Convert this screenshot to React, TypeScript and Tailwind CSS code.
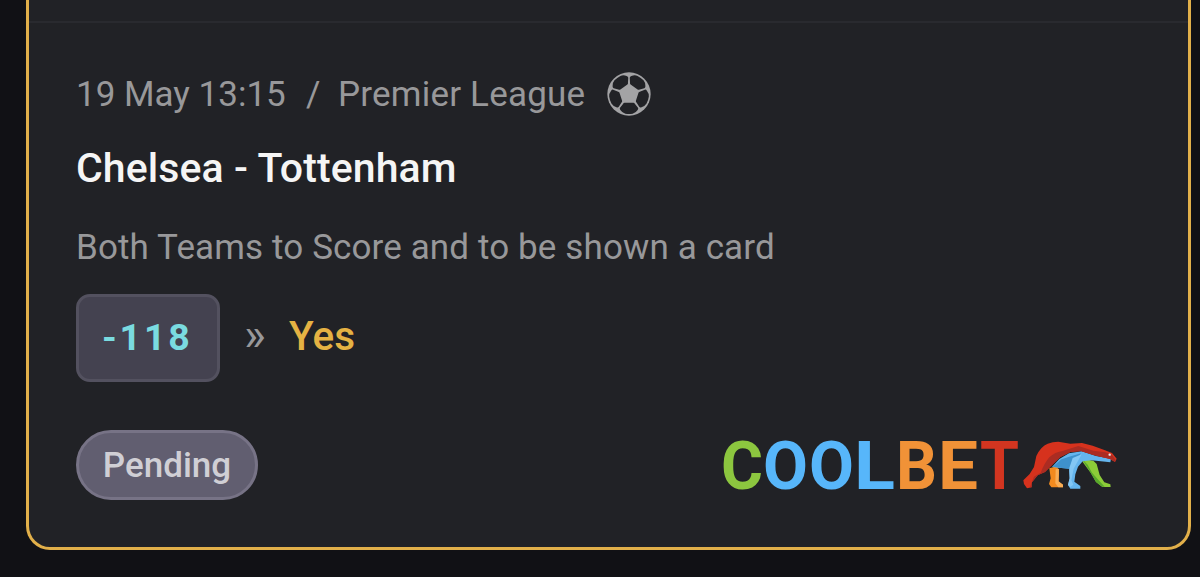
const LETTERS = [
  { char: "C", x: 0, width: 42, color: "#8cc63f" },
  { char: "O", x: 42, width: 45, color: "#57b6fa" },
  { char: "O", x: 88, width: 45, color: "#57b6fa" },
  { char: "L", x: 133, width: 41, color: "#57b6fa" },
  { char: "B", x: 175, width: 41, color: "#f19237" },
  { char: "E", x: 217, width: 40, color: "#f19237" },
  { char: "T", x: 259, width: 39, color: "#d23520" },
];

function FootballIcon() {
  return (
    <svg viewBox="-66 -66 132 132" className="size-11 shrink-0">
      <circle r="65" fill="#a3a3a5" />
      {[0, 72, 144, 216, 288].map((angle) => (
        <path
          key={angle}
          transform={`rotate(${angle})`}
          d="M-13 26H13Q16 26 18 30L27 41Q29 44 26 48Q20 57 11 59Q0 61-11 59Q-20 57-26 48Q-29 44-27 41L-18 30Q-16 26-13 26Z"
          fill="#212226"
        />
      ))}
    </svg>
  );
}

function Bear() {
  return (
    <svg viewBox="0 0 360 210" className="h-[70px] w-[120px] shrink-0">
      {/* back legs */}
      <path d="M118 115L142 108L147 128L145 155L159 164V172H124L117 162L122 145Z" fill="#f28a1e" />
      <path d="M137 118L147 116L146 154L159 164V172H145L136 160Z" fill="#f8ad55" />
      <path d="M216 86L250 92L260 102L269 135L283 157L301 163L302 171H277L258 156L242 128L218 96Z" fill="#8ccc38" />
      <path d="M216 87L233 104L246 128L266 151L284 170H277L258 156L242 128Z" fill="#58a82c" />
      {/* belly and front leg */}
      <path d="M126 111L148 87L177 70L215 64L258 78L303 86L301 97L244 91L218 94L204 110L196 133L193 155L211 168V176H181L174 165L179 145L177 116L155 114Z" fill="#65b5ed" />
      <path d="M128 110L154 88L185 78L213 70L199 91L188 111L181 126L177 116L154 114Z" fill="#3e91cc" />
      <path d="M188 84L215 73L205 91L191 116L184 151L190 164L181 171L174 165L179 145L178 114Z" fill="#83c7f4" />
      {/* back and head */}
      <path d="M40 151L59 132L72 111L79 78Q85 65 94 55Q103 45 113 41Q128 35 145 35L181 41L216 39L248 47L285 61L306 69L320 86L315 96L300 87L251 75L213 63L181 66L151 81L129 102L105 126L83 136L66 157L65 172L51 175L42 162Z" fill="#d6321d" />
      <path d="M72 140L92 128Q104 98 118 82Q134 66 160 62L205 48L250 62L286 67L306 75L317 90L315 96L300 87L251 75L213 63L181 66L151 81L129 102L105 126L83 136L66 157L65 172L60 172Z" fill="#ab2c22" />
      <circle cx="299" cy="74" r="3.5" fill="#eee" />
    </svg>
  );
}

function Logo() {
  return (
    <div className="flex" role="img" aria-label="Coolbet">
      <svg viewBox="0 0 289 70" className="h-[70px] w-[289px] overflow-visible">
        {LETTERS.map((letter, i) => (
          <text
            key={i}
            x={letter.x}
            y="59"
            textLength={letter.width}
            lengthAdjust="spacingAndGlyphs"
            fill={letter.color}
            className="font-['Roboto',sans-serif] text-[66px] font-bold"
          >
            {letter.char}
          </text>
        ))}
      </svg>
      <Bear />
    </div>
  );
}

export default function App() {
  return (
    <div className="h-[577px] overflow-hidden bg-[#111115] pr-[9px] pl-[26px] font-['Roboto',sans-serif]">
      <div className="h-[550px] rounded-b-[24px] border-3 border-t-0 border-[#e2b04a] bg-[#212226]">
        <div className="h-[23px] border-b-2 border-[#292a2f]" />

        <div className="pt-[49px] pr-[58px] pl-[47px]">
          {/* Event */}
          <div className="flex h-11 items-center text-[35px] leading-[44px] whitespace-pre text-[#98989a]">
            <span className="w-[230px] pt-0.5">19 May 13:15</span>
            <span className="w-[32px] pt-0.5">/</span>
            <span className="w-[269px] pt-0.5 tracking-[0.2px]">Premier League</span>
            <FootballIcon />
          </div>
          <h2 className="mt-[28px] text-[41px] leading-[48px] font-medium tracking-[0.1px] whitespace-nowrap text-[#f5f5f5]">
            Chelsea - Tottenham
          </h2>
          <p className="mt-[34px] text-[35px] leading-[44px] tracking-[0.12px] whitespace-nowrap text-[#98989a]">
            Both Teams to Score and to be shown a card
          </p>

          {/* Pick */}
          <div className="mt-6 flex h-[88px] items-center">
            <div className="flex h-[88px] w-36 items-center rounded-[14px] border-3 border-[#53515f] bg-[#444250] pb-0.5 pl-[23px] text-[37.5px] font-bold tracking-[2.8px] text-[#7adbe0]">
              -118
            </div>
            <span className="ml-[24px] w-[45px] pb-2 text-[46px] leading-none text-[#98989a]">»</span>
            <span className="pb-[3px] text-[40.5px] font-medium text-[#e5b243]">Yes</span>
          </div>

          {/* Status */}
          <div className="mt-12 flex h-[70px] items-center justify-between">
            <div className="flex h-[70px] w-[182px] items-center justify-center rounded-full border-3 border-[#777386] bg-[#615e70] pt-0.5 text-[35px] font-medium text-[#d0cfd5]">
              Pending
            </div>
            <Logo />
          </div>
        </div>
      </div>
    </div>
  );
}
